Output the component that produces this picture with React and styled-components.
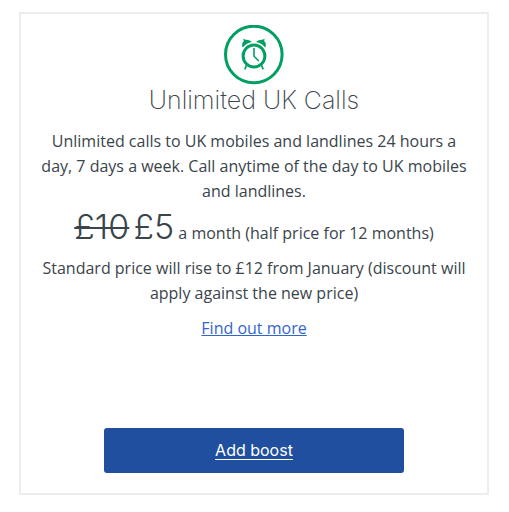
import styled, { createGlobalStyle } from "styled-components";

const GlobalStyle = createGlobalStyle`
  * {
    box-sizing: border-box;
  }
  body {
    margin: 0;
    background-color: #fff;
    color: #3a444b;
    font-family: "Open Sans", "Noto Sans", sans-serif;
    font-size: 16px;
    line-height: 25px;
  }
`;

const AlarmIcon = () => {
  return (
    <Icon viewBox="0 0 60 60" aria-hidden="true">
      <circle cx="29.8" cy="29.5" r="28.3" strokeWidth="3" />
      {/* clock face and hands */}
      <circle cx="30" cy="31" r="10.9" strokeWidth="3" />
      <path d="M30 23V31.2L34.8 36" strokeWidth="1.6" />
      {/* feet */}
      <path d="M22.6 40L20.8 44.4M37.4 40L39.2 44.4" strokeWidth="1.7" />
      {/* bells */}
      <path
        className="bell"
        d="M19.4 13.6L21.4 14.8C24 14.4 26.6 15.6 28 17C24 17.8 20.8 19.8 18.6 22.6C17.6 20.4 18 17.6 19.8 16Z"
      />
      <path
        className="bell"
        d="M40.6 13.6L38.6 14.8C36 14.4 33.4 15.6 32 17C36 17.8 39.2 19.8 41.4 22.6C42.4 20.4 42 17.6 40.2 16Z"
      />
    </Icon>
  );
};

const App = () => {
  return (
    <Page>
      <GlobalStyle />
      <Card>
        <AlarmIcon />
        <Title>Unlimited UK Calls</Title>
        <Text>
          Unlimited calls to UK mobiles and landlines 24 hours a day, 7 days a
          week. Call anytime of the day to UK mobiles and landlines.
        </Text>
        <Price>
          <Amount as="s">£10</Amount> <Amount>£5</Amount> a month (half price
          for 12 months)
        </Price>
        <Text>
          Standard price will rise to £12 from January (discount will apply
          against the new price)
        </Text>
        <MoreLink href="#more">Find out more</MoreLink>
        <BoostLink href="#add-boost">Add boost</BoostLink>
      </Card>
    </Page>
  );
};

const Page = styled.main`
  padding: 12px 20px 16px 19px;
`;

const Card = styled.section`
  display: flex;
  flex-direction: column;
  align-items: center;
  padding: 11px 18px 20px;
  border: 2px solid #ededed;
  text-align: center;
`;

const Icon = styled.svg`
  width: 60px;
  height: 60px;
  fill: none;
  stroke: #00a063;

  .bell {
    fill: #00a063;
    stroke: none;
  }
`;

const Title = styled.h2`
  margin: 0 0 14px;
  font-family: Inter, "Liberation Sans", sans-serif;
  font-size: 25px;
  font-weight: 200;
  line-height: 30px;
`;

const Text = styled.p`
  margin: 0 0 10px;
`;

const Price = styled.p`
  margin: 0 0 10px;
  line-height: 26px;
`;

const Amount = styled.span`
  font-family: Inter, "Liberation Sans", sans-serif;
  font-size: 34px;
  font-weight: 300;
  text-decoration-thickness: 2px;
`;

const MoreLink = styled.a`
  color: #3366cc;
`;

const BoostLink = styled.a`
  width: 100%;
  max-width: 300px;
  margin-top: 87px;
  padding: 10px;
  border-radius: 3px;
  background-color: #1f4f9e;
  color: #fff;
  font-family: Inter, "Liberation Sans", sans-serif;
  text-underline-offset: 3px;
`;

export default App;
